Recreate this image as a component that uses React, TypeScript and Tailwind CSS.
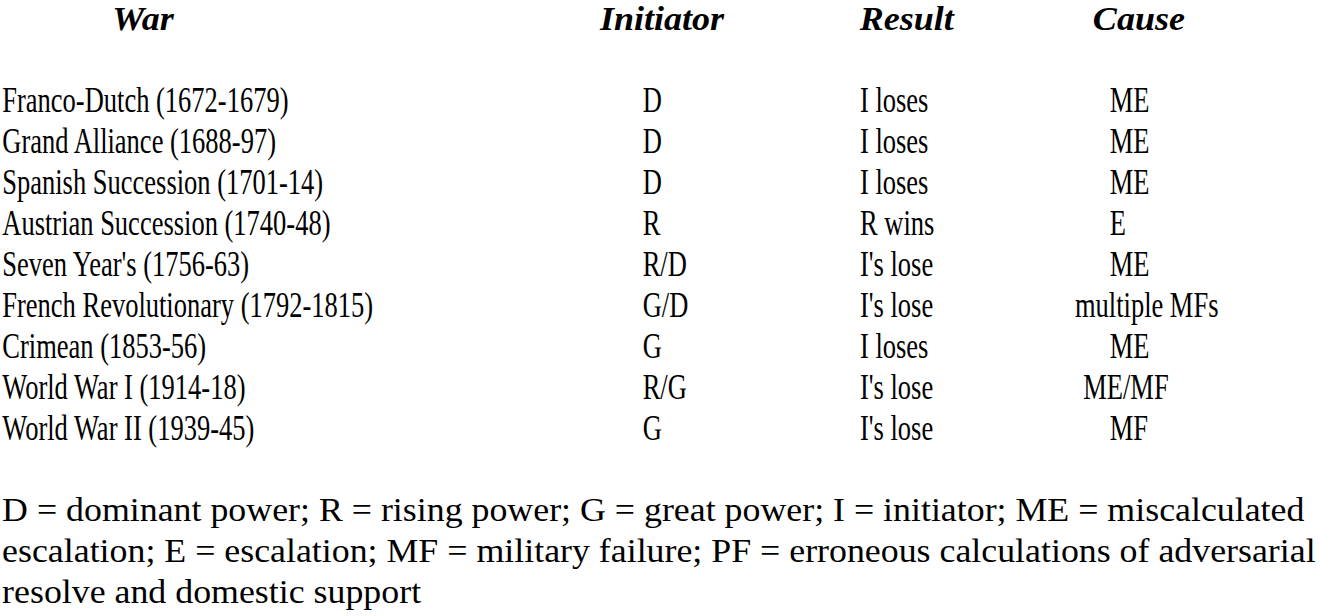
const wars = [
  { war: "Franco-Dutch (1672-1679)", initiator: "D", result: "I loses", cause: "ME", indent: "pl-[46px]" },
  { war: "Grand Alliance (1688-97)", initiator: "D", result: "I loses", cause: "ME", indent: "pl-[46px]" },
  { war: "Spanish Succession (1701-14)", initiator: "D", result: "I loses", cause: "ME", indent: "pl-[46px]" },
  { war: "Austrian Succession (1740-48)", initiator: "R", result: "R wins", cause: "E", indent: "pl-[46px]" },
  { war: "Seven Year's (1756-63)", initiator: "R/D", result: "I's lose", cause: "ME", indent: "pl-[46px]" },
  { war: "French Revolutionary (1792-1815)", initiator: "G/D", result: "I's lose", cause: "multiple MFs", indent: "pl-0" },
  { war: "Crimean (1853-56)", initiator: "G", result: "I loses", cause: "ME", indent: "pl-[46px]" },
  { war: "World War I (1914-18)", initiator: "R/G", result: "I's lose", cause: "ME/MF", indent: "pl-[11px]" },
  { war: "World War II (1939-45)", initiator: "G", result: "I's lose", cause: "MF", indent: "pl-[46px]" },
];

const legend = [
  "D = dominant power; R = rising power; G = great power; I = initiator; ME = miscalculated",
  "escalation; E = escalation; MF = military failure; PF = erroneous calculations of adversarial",
  "resolve and domestic support",
];

export default function App() {
  return (
    <div className="w-[1321px] h-[616px] overflow-hidden bg-white text-black font-['Liberation_Serif',serif]">
      <div className="flex h-[41px] w-[1246px] origin-top-left scale-x-[1.06] text-[34px] leading-[38px] font-bold italic">
        <div className="w-[566px] pl-[106px]">War</div>
        <div className="w-[245px]">Initiator</div>
        <div className="w-[220px]">Result</div>
        <div>Cause</div>
      </div>

      {/* the table rows in the source are set in a condensed face */}
      <div className="mt-[39px] w-[1745px] origin-top-left scale-x-[0.757] pl-[3px] text-[35px] leading-[41px]">
        {wars.map((w) => (
          <div key={w.war} className="grid grid-cols-[846px_287px_284px_1fr]">
            <div>{w.war}</div>
            <div>{w.initiator}</div>
            <div>{w.result}</div>
            <div className={w.indent}>{w.cause}</div>
          </div>
        ))}
      </div>

      <div className="mt-[40px] w-[1253px] origin-top-left scale-x-[1.054] pl-[2px] text-[34px] leading-[41px]">
        {legend.map((line) => (
          <div key={line} className="whitespace-nowrap">{line}</div>
        ))}
      </div>
    </div>
  );
}
